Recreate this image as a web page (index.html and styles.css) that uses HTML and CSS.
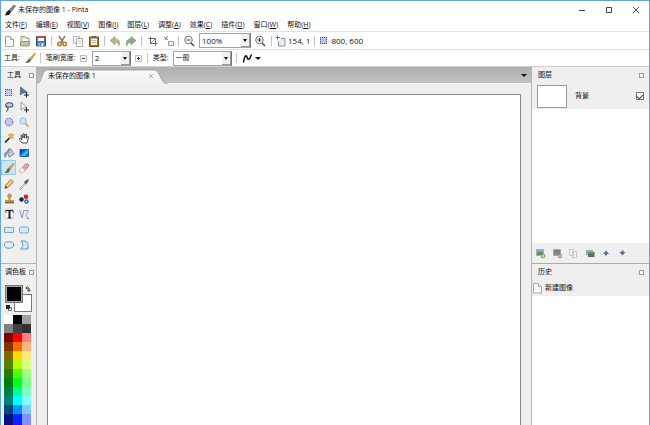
FILE: index.html
```
<!DOCTYPE html>
<html lang="zh-CN">
<head>
  <meta charset="UTF-8">
  <title>未保存的图像 1 - Pinta</title>
  <link rel="stylesheet" href="styles.css">
</head>
<body>
  <div class="window">
    <header class="titlebar">
      <svg class="icon" viewBox="0 0 12 12"><path d="M5 6 10 1l1.500 1L7 8z" fill="#888" stroke="#444" stroke-width=".6"/><path d="M5 6 2.500 8 1 11.500 5 11l2-3z" fill="#1c1c1c"/></svg>
      <h1>未保存的图像 1 - Pinta</h1>
      <div class="window-buttons">
        <button aria-label="最小化"><svg viewBox="0 0 8 8"><path d="M1 4.500h6" stroke="#444"/></svg></button>
        <button aria-label="最大化"><svg viewBox="0 0 8 8"><path d="M1.500 1.500h5v5h-5z" fill="none" stroke="#444"/></svg></button>
        <button aria-label="关闭"><svg viewBox="0 0 8 8"><path d="m1 1 6 6M7 1 1 7" stroke="#444"/></svg></button>
      </div>
    </header>

    <nav class="menubar">
      <button>文件(<u>F</u>)</button>
      <button>编辑(<u>E</u>)</button>
      <button>视图(<u>V</u>)</button>
      <button>图像(<u>I</u>)</button>
      <button>图层(<u>L</u>)</button>
      <button>调整(<u>A</u>)</button>
      <button>效果(<u>C</u>)</button>
      <button>插件(<u>D</u>)</button>
      <button>窗口(<u>W</u>)</button>
      <button>帮助(<u>H</u>)</button>
    </nav>

    <!-- Main toolbar -->
    <div class="toolbar">
      <button class="tb" aria-label="新建"><svg class="icon" viewBox="0 0 12 12"><path d="M2.500 1.500h5l3 3v7h-8z" fill="#fbfbfa" stroke="#a5a5a0"/><path d="M7.500 1.500v3h3" fill="#e4e4e0" stroke="#a5a5a0"/></svg></button>
      <button class="tb" aria-label="打开"><svg class="icon" viewBox="0 0 12 12"><path d="M2 1.500h4l1 1.500h3v5H2z" fill="#d9dfc8" stroke="#9aa485"/><path d="M3 4h6v3H3z" fill="#fafafa"/><path d="M1.500 6.500h9.500l-1 4.500H1.500z" fill="#b9c8a0" stroke="#8f9c78"/></svg></button>
      <button class="tb" aria-label="保存"><svg class="icon" viewBox="0 0 12 12"><path d="M1.500 1.500h9v9.500h-9z" fill="#477fb8" stroke="#2e5584"/><path d="M3 2h6v4H3z" fill="#f6f6f6"/><path d="M2 1h8v2H2z" fill="#d43c36"/><path d="M3.500 8h5v3h-5z" fill="#d8dfe6"/><path d="M4.500 8.500h1.500v2H4.500z" fill="#345"/></svg></button>
      <span class="sep"></span>
      <button class="tb" aria-label="剪切"><svg class="icon" viewBox="0 0 12 12"><path d="M3 1 7.500 8M9 1 4.500 8" stroke="#777c80" stroke-width="1.500"/><circle cx="3.500" cy="9" r="1.700" fill="none" stroke="#c47a16" stroke-width="1.600"/><circle cx="8.700" cy="9" r="1.700" fill="none" stroke="#c47a16" stroke-width="1.600"/></svg></button>
      <button class="tb" aria-label="复制"><svg class="icon" viewBox="0 0 12 12"><path d="M1.500 1.500h6v7h-6z" fill="#f4f4f4" stroke="#b8b8b8"/><path d="M4.500 3.500h6v8h-6z" fill="#fafafa" stroke="#aaa"/><path d="M6 6h3M6 8h3" stroke="#ccc"/></svg></button>
      <button class="tb" aria-label="粘贴"><svg class="icon" viewBox="0 0 12 12"><path d="M1.500 2h9v9.500h-9z" fill="#a9731f" stroke="#76500f"/><path d="M3 3.500h6V10H3z" fill="#f1f1ee"/><path d="M4 1h4v2H4z" fill="#666"/><path d="M4 5.500h4M4 7.500h4" stroke="#bbb"/></svg></button>
      <span class="sep"></span>
      <button class="tb" aria-label="撤消"><svg class="icon" viewBox="0 0 12 12"><path d="m1 5.500 5-4v2.500c4 0 5.500 2.500 4 7 0-2.500-1.500-3.700-4-3.500V10z" fill="#b9b586" stroke="#9b976a" stroke-width=".6"/></svg></button>
      <button class="tb" aria-label="重做"><svg class="icon" viewBox="0 0 12 12"><path d="m11 5.500-5-4v2.500C2 4 .5 6.500 2 11c0-2.500 1.500-3.700 4-3.500V10z" fill="#8fac8d" stroke="#6f916d" stroke-width=".6"/></svg></button>
      <span class="sep"></span>
      <button class="tb" aria-label="裁剪"><svg class="icon" viewBox="0 0 12 12"><path d="M4.500 1.500v7h7M2.500 3.500h7v7.500" fill="none" stroke="#5e6478"/><path d="m5 8 4-4" stroke="#99a"/></svg></button>
      <button class="tb" aria-label="取消选择"><svg class="icon" viewBox="0 0 12 12"><path d="m2 2 4 3M6 1 3 5" stroke="#555" stroke-width=".8"/><path d="M6.500 6.500h5v4h-5z" fill="#f1f1f1" stroke="#999"/></svg></button>
      <span class="sep"></span>
      <button class="tb" aria-label="缩小"><svg class="icon" viewBox="0 0 12 12"><circle cx="5.500" cy="5" r="3.800" fill="#f6f7f7" stroke="#777"/><path d="m8 8 3 3" stroke="#555" stroke-width="1.700"/><path d="M3.500 5h4" stroke="#444"/></svg></button>
      <div class="combo combo-zoom">
        <select aria-label="缩放"><option>100%</option></select>
        <span class="drop"></span>
      </div>
      <button class="tb" aria-label="放大"><svg class="icon" viewBox="0 0 12 12"><circle cx="4.500" cy="5" r="3.800" fill="#f6f7f7" stroke="#777"/><path d="m7 8 3 3" stroke="#555" stroke-width="1.700"/><path d="M2.500 5h4M4.500 3v4" stroke="#444"/></svg></button>
      <span class="sep"></span>
      <div class="status">
        <svg class="icon" viewBox="0 0 12 12"><path d="M0 2.500h4M1.500.5v4" stroke="#667"/><path d="M5 3.500h4v7.500H2.500V6" fill="#e6ecf3" stroke="#8795a8"/></svg>
        <span>154, 1</span>
      </div>
      <span class="sep"></span>
      <div class="status">
        <svg class="icon" viewBox="0 0 12 12"><path d="M1 2h7v7H1z" fill="#bcc1ed"/><path d="M1 2.500h7M1 8.500h7M1.500 2v7M7.500 2v7" fill="none" stroke="#3f4899" stroke-dasharray="1 1"/></svg>
        <span>800, 600</span>
      </div>
    </div>

    <!-- Options of the active tool -->
    <div class="toolbar options">
      <span>工具:</span>
      <svg class="icon" viewBox="0 0 12 12"><path d="M11 1 5.500 6.500 7 8l4.500-6z" fill="#d39a2b" stroke="#a77a24" stroke-width=".4"/><path d="M5.500 6.500C3.500 7 3.500 10 .5 10.500c3 1 6 0 6.500-2.500z" fill="#6c6b55"/></svg>
      <span class="sep"></span>
      <label for="brush-width">笔刷宽度:</label>
      <button class="step" aria-label="减小"><svg viewBox="0 0 7 7"><path d="M.5.5h6v6h-6z" fill="#f7f7f7" stroke="#bbb"/><path d="M2 3.500h3" stroke="#444"/></svg></button>
      <div class="combo combo-width">
        <select id="brush-width"><option>2</option></select>
        <span class="drop"></span>
      </div>
      <button class="step" aria-label="增大"><svg viewBox="0 0 7 7"><path d="M.5.5h6v6h-6z" fill="#f7f7f7" stroke="#bbb"/><path d="M2 3.500h3M3.500 2v3" stroke="#444"/></svg></button>
      <span class="sep"></span>
      <label for="brush-type">类型:</label>
      <div class="combo combo-type">
        <select id="brush-type"><option>一般</option></select>
        <span class="drop"></span>
      </div>
      <span class="sep"></span>
      <button class="curve" aria-label="抗锯齿">
        <svg class="icon" viewBox="0 0 12 12"><path d="M1.500 10.500C2 6 3.500 3 4.500 4S5 8 7 7s1-4 3-4" fill="none" stroke="#111" stroke-width="1.500"/></svg>
        <span class="arrow"></span>
      </button>
    </div>

    <main class="workspace">
      <aside class="left">
        <section class="toolbox">
          <header class="pad-title"><h2>工具</h2><button class="pin" aria-label="停靠工具"></button></header>
          <div class="tool-group">
            <button aria-label="矩形选择"><svg class="icon" viewBox="0 0 12 12"><path d="M2 3h7v7H2z" fill="#c3c7ee"/><path d="M2 3.500h7M2 9.500h7M2.500 3v7M8.500 3v7" fill="none" stroke="#4951a2" stroke-dasharray="1 1"/></svg></button>
            <button aria-label="移动所选像素"><svg class="icon" viewBox="0 0 12 12"><path d="M2.500 1v8l2-2 5-.5z" fill="#5d7896" stroke="#41556e" stroke-width=".7"/><path d="M6 9h5M8.500 6.500v5" stroke="#222"/></svg></button>
            <button aria-label="套索选择"><svg class="icon" viewBox="0 0 12 12"><ellipse cx="6.300" cy="4" rx="3.700" ry="2.300" fill="#c3c7ee" stroke="#34396c"/><path d="M3 5c0 2 2 1 2 3s-1 2-2 3" fill="none" stroke="#34396c"/></svg></button>
            <button aria-label="移动选区"><svg class="icon" viewBox="0 0 12 12"><path d="M3 1v8l2-2 4-.5z" fill="#f5f8fc" stroke="#7085a0" stroke-width=".8"/><path d="M6 9h5M8.500 6.500v5" stroke="#222"/></svg></button>
            <button aria-label="椭圆选择"><svg class="icon" viewBox="0 0 12 12"><circle cx="6" cy="6" r="3.800" fill="#c3c7ee" stroke="#4951a2" stroke-dasharray="1.500 1"/></svg></button>
            <button aria-label="缩放"><svg class="icon" viewBox="0 0 12 12"><path d="m7 7 3.500 3.500" stroke="#d8a765" stroke-width="2"/><circle cx="5" cy="5" r="3.200" fill="#cbe3f6" stroke="#9dbbd3"/></svg></button>
          </div>
          <div class="tool-group">
            <button aria-label="魔术棒"><svg class="icon" viewBox="0 0 12 12"><path d="m2 10.500 5-5" stroke="#222" stroke-width="1.700"/><path d="m8 1 .7 2 2.300-.5L9.500 4.500 10.500 7 8.300 5.700 6 7l.8-2.500L5 2.500l2.300.3z" fill="#f4b92d" stroke="#bd7a12" stroke-width=".4"/></svg></button>
            <button aria-label="平移"><svg class="icon" viewBox="0 0 12 12"><path d="M4 11 1.500 7.500Q1 6 2.500 6.500L4 8 2.800 3.500q.7-1 1.400 0L5 6V2q.7-1 1.300 0v4L7.500 2.300q.9-.7 1.200.5L8.200 6.500l1.300-2q1-.4 1 .7L9 11z" fill="#fff" stroke="#222" stroke-width=".8"/></svg></button>
            <button aria-label="油漆桶"><svg class="icon" viewBox="0 0 12 12"><path d="m4 4 4-2 3 5-5 3z" fill="#c9ced1" stroke="#6d7478" stroke-width=".8"/><path d="M6 1v5" stroke="#777"/><path d="M1 8c0-3 2-4 5-3-2 1-2 3-3 5S1 10 1 8z" fill="#6da3ce"/></svg></button>
            <button aria-label="渐变"><svg class="icon" viewBox="0 0 12 12"><defs><linearGradient id="blue" x2="1" y2="1"><stop stop-color="#0534a8"/><stop offset=".3" stop-color="#0a50d0"/><stop offset=".6" stop-color="#1fd0ff"/><stop offset="1" stop-color="#0535a8"/></linearGradient></defs><path d="M2 2.500h8.500v7H2z" fill="url(#blue)" stroke="#123b8c" stroke-width=".7"/></svg></button>
            <button class="active" aria-label="画笔"><svg class="icon" viewBox="0 0 12 12"><path d="M10.500 1 5.500 6 7 8l4-6z" fill="#d39a2b" stroke="#a77a24" stroke-width=".4"/><path d="M5.500 6C3.500 7 4 10 1 10.500c3 1 5.500 0 6-2.500z" fill="#66644d"/></svg></button>
            <button aria-label="橡皮擦"><svg class="icon" viewBox="0 0 12 12"><path d="m1.500 8.500 6-6.500h3v2.500L5 10.500H2.500z" fill="#e9a3a6" stroke="#b26d70" stroke-width=".7"/><path d="m1.700 8.300 2.500-2.500L6.700 8.500 5 10.500H2.500z" fill="#f4f4f2"/></svg></button>
          </div>
          <div class="tool-group">
            <button aria-label="铅笔"><svg class="icon" viewBox="0 0 12 12"><path d="M2 10.500 2.500 7 8 1.500 10.500 4 5 9.500z" fill="#f1b54c" stroke="#a96b1f" stroke-width=".7"/><path d="M4 8 9 3" stroke="#fbe3b0"/><path d="M2 10.500 2.500 8 4.500 9.700z" fill="#40301d"/></svg></button>
            <button aria-label="颜色选择器"><svg class="icon" viewBox="0 0 12 12"><path d="m2 10 5-5 1 1-5 5-1.500.5z" fill="#e3f0e4" stroke="#86a389" stroke-width=".7"/><path d="M6 4 8.500 2 11 1 10 4 8 6.500z" fill="#506356"/></svg></button>
            <button aria-label="克隆图章"><svg class="icon" viewBox="0 0 12 12"><circle cx="6.500" cy="2.800" r="1.800" fill="#caa04c" stroke="#806020" stroke-width=".6"/><path d="M5.500 4h2v3H11v2H2V7h3.500z" fill="#bd9345"/><path d="M2 9.700h9" stroke="#735924" stroke-width="1.300"/></svg></button>
            <button aria-label="重新着色"><svg class="icon" viewBox="0 0 12 12"><circle cx="8" cy="3.700" r="2.300" fill="#e11b22"/><circle cx="3.500" cy="6.500" r="2.300" fill="#222b35"/><circle cx="8.500" cy="8.500" r="2.300" fill="#2572bd"/><circle cx="8.500" cy="8.500" r=".7" fill="#fff"/></svg></button>
            <button aria-label="文本"><svg class="icon" viewBox="0 0 12 12"><path d="M2 1.500h8.500v9H2z" fill="#fff" stroke="#aaa" stroke-width=".5"/><path d="M3 4.500V2.500h7v2M4.500 10h4" fill="none" stroke="#222"/><path d="M6.500 2.500V10" stroke="#222" stroke-width="2"/></svg></button>
            <button aria-label="线条/曲线"><svg class="icon" viewBox="0 0 12 12"><path d="m1.500 2 2.500 8 2-8" fill="none" stroke="#7795c5"/><path d="M6.500 2.500h3.500c1 2-2 3-2 4s2 2 1 4h2" fill="none" stroke="#6e9cc9"/></svg></button>
          </div>
          <div class="tool-group">
            <button aria-label="矩形"><svg class="icon" viewBox="0 0 12 12"><path d="M1.500 3.500h9v5h-9z" fill="#d5e8f6" stroke="#77a6c9"/></svg></button>
            <button aria-label="圆角矩形"><svg class="icon" viewBox="0 0 12 12"><rect x="1.500" y="3" width="9" height="6" rx="1.500" fill="#d5e8f6" stroke="#77a6c9"/></svg></button>
            <button aria-label="椭圆"><svg class="icon" viewBox="0 0 12 12"><ellipse cx="6" cy="6" rx="4.700" ry="3.200" fill="#e4f1fa" stroke="#6196bd"/></svg></button>
            <button aria-label="自由形状"><svg class="icon" viewBox="0 0 12 12"><path d="M3 2h4c3 1 3 3 3 5v3H2.500C5 8 6 5 3 2z" fill="#d5e8f6" stroke="#6196bd"/></svg></button>
          </div>
        </section>

        <section class="palette">
          <header class="pad-title"><h2>调色板</h2><button class="pin" aria-label="停靠调色板"></button></header>
          <div class="swatches">
            <button class="secondary" aria-label="次要颜色"></button>
            <button class="primary" aria-label="主要颜色"></button>
            <button class="swap" aria-label="交换颜色"><svg viewBox="0 0 6 6"><path d="M1 2h3v3M2.500.5 1 2l1.500 1.500M2.500 4 4 5.500 5.500 4" fill="none" stroke="#222" stroke-width=".9"/></svg></button>
            <button class="reset" aria-label="重置颜色"><svg viewBox="0 0 6 6"><path d="M2.500 2.500h3v3h-3z" fill="#fff" stroke="#333" stroke-width=".7"/><path d="M0 0h4v4H0z" fill="#222"/></svg></button>
          </div>
          <div class="colors" id="colors"></div>
        </section>
      </aside>

      <section class="document">
        <div class="tabs">
          <div class="tab">
            <svg class="tab-shape" viewBox="0 0 132 17" preserveAspectRatio="none"><defs><linearGradient id="tab" x2="0" y2="1"><stop stop-color="#fafafa"/><stop offset="1" stop-color="#efefef"/></linearGradient></defs><path d="M0 17C5 16 5 3 10 3h107c7 0 5 13 14 14z" fill="url(#tab)"/><path d="M0 17C5 16 5 3 10 3h107c7 0 5 13 14 14" fill="none" stroke="#8e8e8e" stroke-width=".7"/></svg>
            <span>未保存的图像 1</span>
            <button class="close" aria-label="关闭标签"><svg viewBox="0 0 6 6"><path d="m1 1 4 4M5 1 1 5" stroke="#aaa"/></svg></button>
          </div>
          <button class="tab-list" aria-label="标签列表"><span class="arrow"></span></button>
        </div>
        <div class="canvas-area"><div class="canvas"></div></div>
      </section>

      <aside class="right">
        <section class="layers">
          <header class="pad-title"><h2>图层</h2><button class="pin" aria-label="停靠图层"></button></header>
          <label class="layer">
            <span class="thumb"></span>
            <span>背景</span>
            <input type="checkbox" checked>
          </label>
          <div class="list"></div>
          <div class="layer-tools">
            <button aria-label="添加图层"><svg class="icon" viewBox="0 0 12 12"><path d="M2.500 2.500h7v6h-7z" fill="#648f5c" stroke="#a3b2a0"/><path d="M3 3h6v2H3z" fill="#7fa7c8"/><circle cx="9" cy="9" r="2.300" fill="#55a344"/><path d="M7.500 9h3M9 7.500v3" stroke="#fff" stroke-width=".8"/></svg></button>
            <button aria-label="删除图层"><svg class="icon" viewBox="0 0 12 12"><path d="M2.500 2.500h7v6h-7z" fill="#888" stroke="#aaa"/><path d="M3 3h6v2H3z" fill="#777d82"/><circle cx="9" cy="9" r="2.200" fill="#b98471"/><path d="M7.500 9h3" stroke="#fff" stroke-width=".8"/></svg></button>
            <button aria-label="复制图层"><svg class="icon" viewBox="0 0 12 12"><path d="M1.500 2.500h4v6h-4zM4.500 4.500h4v6h-4z" fill="#f8f8f8" stroke="#c6c6c6"/></svg></button>
            <button aria-label="合并图层"><svg class="icon" viewBox="0 0 12 12"><path d="M1 3h7v5H1z" fill="#9eac9d"/><path d="M3 5h6.500v5H3z" fill="#56734f"/><path d="M3 5h6.500v2H3z" fill="#748a7b"/></svg></button>
            <button aria-label="上移"><svg class="icon" viewBox="0 0 12 12"><path d="M4 3.500 7 7H5v1.500H3V7H1z" fill="#596b96"/></svg></button>
            <button aria-label="下移"><svg class="icon" viewBox="0 0 12 12"><path d="M3.500 8.500 6.500 5H4.500V3.500h-2V5H.5z" fill="#596b96"/></svg></button>
          </div>
        </section>
        <section class="history">
          <header class="pad-title"><h2>历史</h2><button class="pin" aria-label="停靠历史"></button></header>
          <div class="history-item">
            <svg class="icon" viewBox="0 0 12 12"><path d="M1.500 1.500h5l3 3v6.500h-8z" fill="#fdfdfc" stroke="#aaa"/><path d="M6.500 1.500v3h3" fill="#e8e8e8" stroke="#aaa"/></svg>
            <span>新建图像</span>
          </div>
          <div class="list"></div>
        </section>
      </aside>
    </main>
  </div>

  <script>
    const colors = [
      "#ffffff", "#000000", "#a0a0a0",
      "#808080", "#404040", "#303030",
      "#7f0000", "#ff0000", "#ff7f7f",
      "#7f3300", "#ff6a00", "#ffb27f",
      "#7f6a00", "#ffd800", "#ffe97f",
      "#5b7f00", "#b6ff00", "#daff7f",
      "#267f00", "#4cff00", "#a5ff7f",
      "#007f0e", "#00ff21", "#7fff8e",
      "#007f46", "#00ff90", "#7fffc5",
      "#007f7f", "#00ffff", "#7fffff",
      "#004a7f", "#0094ff", "#7fc9ff",
      "#00137f", "#0026ff", "#7f92ff",
      "#21007f", "#4800ff", "#a17fff"
    ];

    const palette = document.getElementById('colors');
    colors.forEach(color => {
      const cell = document.createElement('button');
      cell.style.backgroundColor = color;
      cell.setAttribute('aria-label', color);
      palette.appendChild(cell);
    });
  </script>
</body>
</html>
```
FILE: styles.css
```
* {
  box-sizing: border-box;
}

body {
  margin: 0;
  height: 100vh;
  overflow: hidden;
  font-family: "Open Sans", "Noto Sans CJK SC", sans-serif;
  font-size: 7px;
  line-height: 10px;
  color: #111;
}

h1, h2 {
  margin: 0;
  font-size: 7px;
  font-weight: normal;
}

button {
  display: flex;
  align-items: center;
  justify-content: center;
  margin: 0;
  padding: 0;
  border: none;
  background: none;
  font: inherit;
  color: inherit;
}

svg {
  display: block;
}

.icon {
  width: 12px;
  height: 12px;
  flex: none;
}

.window {
  display: flex;
  flex-direction: column;
  height: 100vh;
  border: 1px solid #62a5df;
  border-bottom: none;
  background: #fff;
}

/* Title and menus */
.titlebar {
  display: flex;
  align-items: center;
  height: 17px;
  padding-left: 3px;
  gap: 2px;
  flex: none;
}

.window-buttons {
  display: flex;
  margin-left: auto;
}

.window-buttons button {
  width: 27px;
  height: 17px;
}

.window-buttons svg {
  width: 8px;
  height: 8px;
}

.menubar {
  display: flex;
  gap: 9px;
  height: 14px;
  padding-left: 4px;
  border-bottom: 1px solid #e2e2e2;
  flex: none;
}

/* Toolbars */
.toolbar {
  display: flex;
  align-items: center;
  gap: 4px;
  height: 18px;
  padding-left: 2px;
  border-bottom: 1px solid #e2e2e2;
  flex: none;
}

.options {
  height: 16px;
  padding-left: 3px;
  border-bottom: none;
}

.sep {
  width: 1px;
  height: 10px;
  background: #c4c4c4;
}

.options .sep {
  margin-right: 1px;
}

.status {
  display: flex;
  align-items: center;
  font-size: 8px;
}

.combo {
  position: relative;
  height: 15px;
}

.combo select {
  display: block;
  width: 100%;
  height: 100%;
  padding: 0 0 0 2px;
  border: 1px solid #a4a4a4;
  border-right-color: #777;
  border-radius: 0;
  background: #fff;
  appearance: none;
  font: inherit;
  color: inherit;
}

.combo-zoom {
  width: 52px;
  font-size: 8px;
}

.combo-width {
  width: 39px;
  font-size: 8px;
}

.combo-type {
  width: 59px;
}

.drop {
  position: absolute;
  top: 1px;
  right: 1px;
  bottom: 1px;
  width: 9px;
  background: #f0f0f0;
  border-right: 1px solid #999;
  border-bottom: 1px solid #999;
  pointer-events: none;
}

.drop::after {
  content: "";
  position: absolute;
  top: 5px;
  left: 2px;
  border: 2px solid transparent;
  border-top: 3px solid #111;
  border-bottom: none;
}

.arrow {
  border: 3px solid transparent;
  border-top-color: #111;
  border-bottom: none;
}

.step {
  margin-right: 1px;
}

.step svg {
  width: 7px;
  height: 7px;
}

.curve {
  gap: 1px;
}

/* Panels */
.workspace {
  display: flex;
  flex: 1;
  min-height: 0;
  border-top: 1px solid #d0d0d0;
}

.pad-title {
  display: flex;
  align-items: center;
  justify-content: space-between;
  height: 16px;
  padding: 0 2px 0 6px;
}

.pin {
  width: 5px;
  height: 5px;
  border: 1px solid #999;
  background: #f8f8f8;
}

.left {
  width: 36px;
  background: #efefef;
  border-right: 1px solid #b4b4b4;
  flex: none;
}

.toolbox {
  display: flex;
  flex-direction: column;
  gap: 1px;
  height: 197px;
  border-bottom: 1px solid #b4b4b4;
}

.tool-group {
  display: grid;
  grid-template-columns: 15px 15px;
  grid-auto-rows: 15px;
}

.active {
  background: #cce4f7;
  outline: 1px solid #9acaf0;
  outline-offset: -1px;
}

.palette .pad-title {
  padding-left: 4px;
}

.swatches {
  position: relative;
  width: 27px;
  height: 27px;
  margin: 5px 4px 3px;
}

.swatches button {
  position: absolute;
}

.primary, .secondary {
  width: 18px;
  height: 18px;
  border: 1px solid #777;
}

.primary {
  top: 0;
  left: 0;
  background: #000;
  box-shadow: inset 0 0 0 1px #aaa;
}

.secondary {
  right: 0;
  bottom: 0;
  background: #fff;
}

.swap, .reset {
  width: 6px;
  height: 6px;
}

.swap {
  top: 1px;
  right: 1px;
}

.reset {
  bottom: 1px;
  left: 1px;
}

.colors {
  display: grid;
  grid-template-columns: repeat(3, 9px);
  grid-auto-rows: 9px;
  margin-left: 3px;
}

/* Open image */
.document {
  display: flex;
  flex-direction: column;
  flex: 1;
  min-width: 0;
  background: #efefef;
}

.tabs {
  display: flex;
  justify-content: space-between;
  height: 17px;
  background: linear-gradient(#b0b0b0, #c0c0c0);
  border-bottom: 1px solid #f8f8f8;
  flex: none;
}

.tab {
  position: relative;
  display: flex;
  align-items: center;
  justify-content: space-between;
  width: 132px;
  padding: 2px 15px 0 11px;
}

.tab span, .tab button {
  position: relative;
}

.tab-shape {
  position: absolute;
  top: 0;
  left: 0;
  width: 100%;
  height: 17px;
}

.close svg {
  width: 6px;
  height: 6px;
}

.tab-list {
  width: 14px;
}

.canvas-area {
  display: flex;
  flex: 1;
  padding: 10px 10px 0;
}

.canvas {
  flex: 1;
  border: 1px solid #888;
  border-bottom: none;
  background: #fff;
}

.right {
  display: flex;
  flex-direction: column;
  width: 118px;
  background: #efefef;
  border-left: 1px solid #b4b4b4;
  flex: none;
}

.right .pad-title {
  padding-right: 5px;
}

.layers {
  display: flex;
  flex-direction: column;
  height: 197px;
  border-bottom: 1px solid #aaa;
  flex: none;
}

.layer {
  display: flex;
  align-items: center;
  gap: 8px;
  height: 26px;
  padding: 0 5px;
}

.thumb {
  width: 30px;
  height: 23px;
  border: 1px solid #999;
  background: #fff;
}

.layer input {
  width: 8px;
  height: 8px;
  margin: 0 0 0 auto;
  appearance: none;
  border: 1px solid #777;
  background: #fff;
}

.layer input:checked::after {
  content: "";
  display: block;
  width: 5px;
  height: 3px;
  margin-top: 1px;
  border-left: 1px solid #444;
  border-bottom: 1px solid #444;
  transform: rotate(-45deg);
}

.list {
  flex: 1;
  background: #fff;
}

.layer-tools {
  display: flex;
  align-items: center;
  gap: 5px;
  height: 20px;
  padding-left: 2px;
}

.history {
  display: flex;
  flex-direction: column;
  flex: 1;
}

.history-item {
  display: flex;
  align-items: center;
  gap: 1px;
  height: 16px;
}
```
